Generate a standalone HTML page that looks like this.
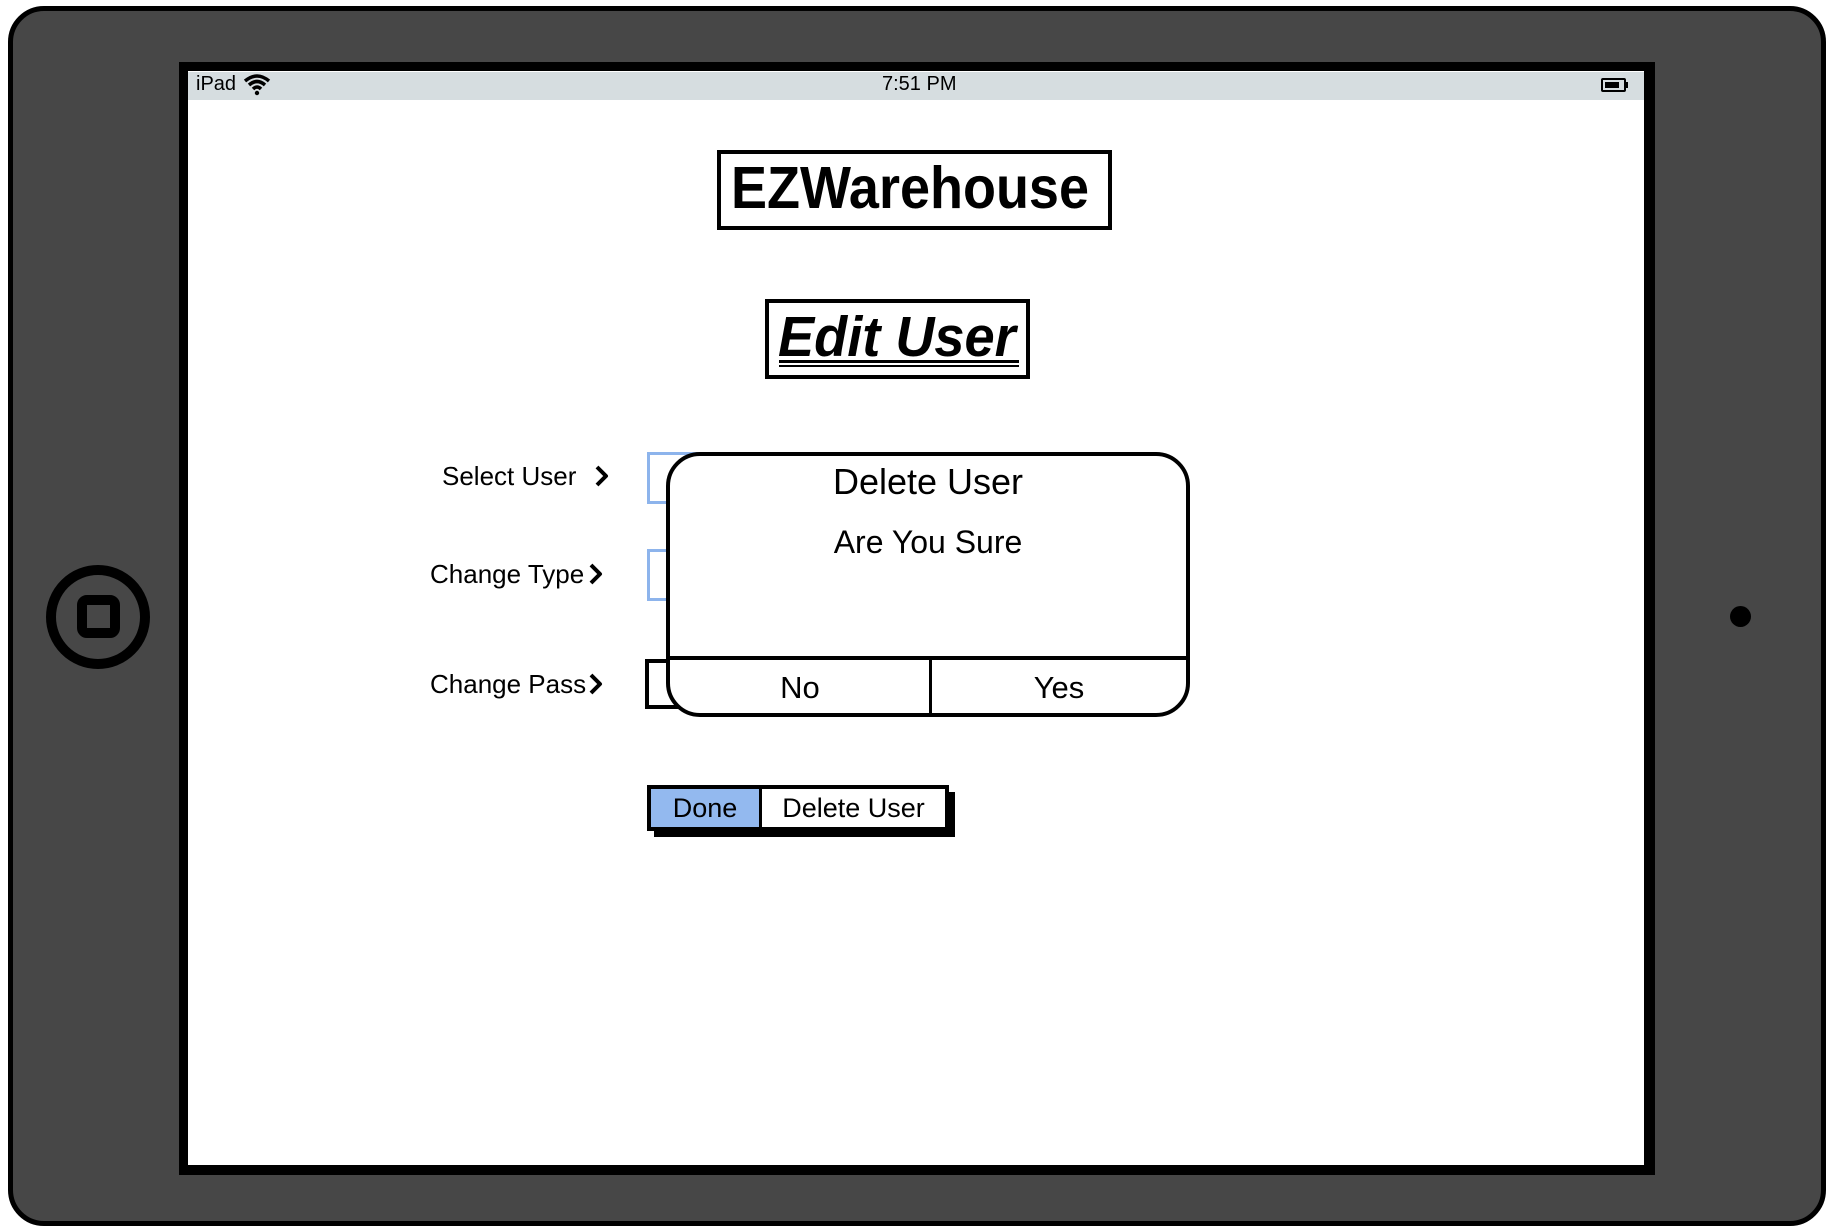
<!DOCTYPE html>
<html><head><meta charset="utf-8"><style>
*{margin:0;padding:0;box-sizing:border-box}
body{width:1832px;height:1232px;background:#fff;position:relative;overflow:hidden;font-family:"Liberation Sans",sans-serif;color:#000}
.a{position:absolute}
.t{position:absolute;white-space:nowrap}
.ch{position:absolute}
</style></head><body>
<div class="a" style="left:8px;top:6px;width:1818px;height:1220px;background:#474747;border:5px solid #000;border-radius:36px"></div>
<div class="a" style="left:179px;top:62px;width:1476px;height:1113px;background:#000"></div>
<div class="a" style="left:188px;top:71px;width:1456px;height:1094px;background:#fff"></div>
<div class="a" style="left:188px;top:72px;width:1456px;height:28px;background:#d6dde0"></div>
<div class="t" style="left:196px;top:73px;font-size:20px">iPad</div>
<svg class="a" style="left:243px;top:73px" width="28" height="24" viewBox="0 0 28 24"><path d="M2 8 Q14 -2 26 8" stroke="#000" stroke-width="3.5" fill="none"/><path d="M6 12 Q14 5 22 12" stroke="#000" stroke-width="3.5" fill="none"/><path d="M10 16 Q14 12 18 16" stroke="#000" stroke-width="3.5" fill="none"/><circle cx="14" cy="20" r="2.2"/></svg>
<div class="t" style="left:882px;top:73px;font-size:20px">7:51 PM</div>
<div class="a" style="left:1601px;top:78px;width:25px;height:14px;border:2px solid #000;border-radius:2px"></div>
<div class="a" style="left:1605px;top:82px;width:14px;height:6px;background:#000"></div>
<div class="a" style="left:1626px;top:82px;width:2px;height:6px;background:#000"></div>
<div class="a" style="left:46px;top:565px;width:104px;height:104px;border:10px solid #000;border-radius:50%"></div>
<div class="a" style="left:77px;top:595px;width:43px;height:43px;border:10px solid #000;border-radius:10px"></div>
<div class="a" style="left:1730px;top:606px;width:21px;height:21px;background:#000;border-radius:50%"></div>

<div class="a" style="left:717px;top:150px;width:395px;height:80px;border:4px solid #000"></div>
<div class="t" style="left:731px;top:156px;font-size:59px;font-weight:bold;line-height:64px;transform:scaleX(0.915);transform-origin:left center">EZWarehouse</div>
<div class="a" style="left:765px;top:299px;width:265px;height:80px;border:4px solid #000"></div>
<div class="t" style="left:778px;top:305px;font-size:57px;font-weight:bold;font-style:italic;line-height:64px;transform:scaleX(0.95);transform-origin:left center">Edit User</div>
<div class="a" style="left:779px;top:360px;width:240px;height:3px;background:#000"></div>
<div class="a" style="left:779px;top:365px;width:240px;height:2px;background:#000"></div>

<div class="t" style="left:442px;top:461px;font-size:26px">Select User</div>
<svg class="ch" style="left:594px;top:464px" width="16" height="24" viewBox="0 0 16 24"><path d="M3 3 L12 12 L3 21" stroke="#000" stroke-width="4" fill="none" stroke-linejoin="round"/></svg>
<div class="t" style="left:430px;top:559px;font-size:26px">Change Type</div>
<svg class="ch" style="left:588px;top:562px" width="16" height="24" viewBox="0 0 16 24"><path d="M3 3 L12 12 L3 21" stroke="#000" stroke-width="4" fill="none" stroke-linejoin="round"/></svg>
<div class="t" style="left:430px;top:669px;font-size:26px">Change Pass</div>
<svg class="ch" style="left:588px;top:672px" width="16" height="24" viewBox="0 0 16 24"><path d="M3 3 L12 12 L3 21" stroke="#000" stroke-width="4" fill="none" stroke-linejoin="round"/></svg>

<div class="a" style="left:647px;top:452px;width:60px;height:52px;border:3px solid #8db4ec"></div>
<div class="a" style="left:647px;top:549px;width:60px;height:52px;border:3px solid #8db4ec"></div>
<div class="a" style="left:645px;top:659px;width:60px;height:50px;border:4px solid #000"></div>

<div class="a" style="left:666px;top:452px;width:524px;height:265px;border:4px solid #000;border-radius:34px;background:#fff;overflow:hidden">
<div class="a" style="left:0;top:200px;width:520px;height:4px;background:#000"></div>
<div class="a" style="left:259px;top:202px;width:3px;height:60px;background:#000"></div>
</div>
<div class="a" style="left:666px;top:462px;width:524px;text-align:center;font-size:36px;line-height:40px">Delete User</div>
<div class="a" style="left:666px;top:524px;width:524px;text-align:center;font-size:32px;line-height:36px">Are You Sure</div>
<div class="a" style="left:670px;top:670px;width:260px;text-align:center;font-size:31px;line-height:36px">No</div>
<div class="a" style="left:930px;top:670px;width:258px;text-align:center;font-size:31px;line-height:36px">Yes</div>

<div class="a" style="left:654px;top:792px;width:301px;height:45px;background:#000"></div>
<div class="a" style="left:647px;top:785px;width:302px;height:46px;border:4px solid #000;background:#fff"></div>
<div class="a" style="left:651px;top:789px;width:108px;height:38px;background:#93b9ef"></div>
<div class="a" style="left:759px;top:789px;width:3px;height:38px;background:#000"></div>
<div class="a" style="left:651px;top:789px;width:108px;text-align:center;font-size:27px;line-height:38px">Done</div>
<div class="a" style="left:762px;top:789px;width:183px;text-align:center;font-size:27px;line-height:38px">Delete User</div>
</body></html>
